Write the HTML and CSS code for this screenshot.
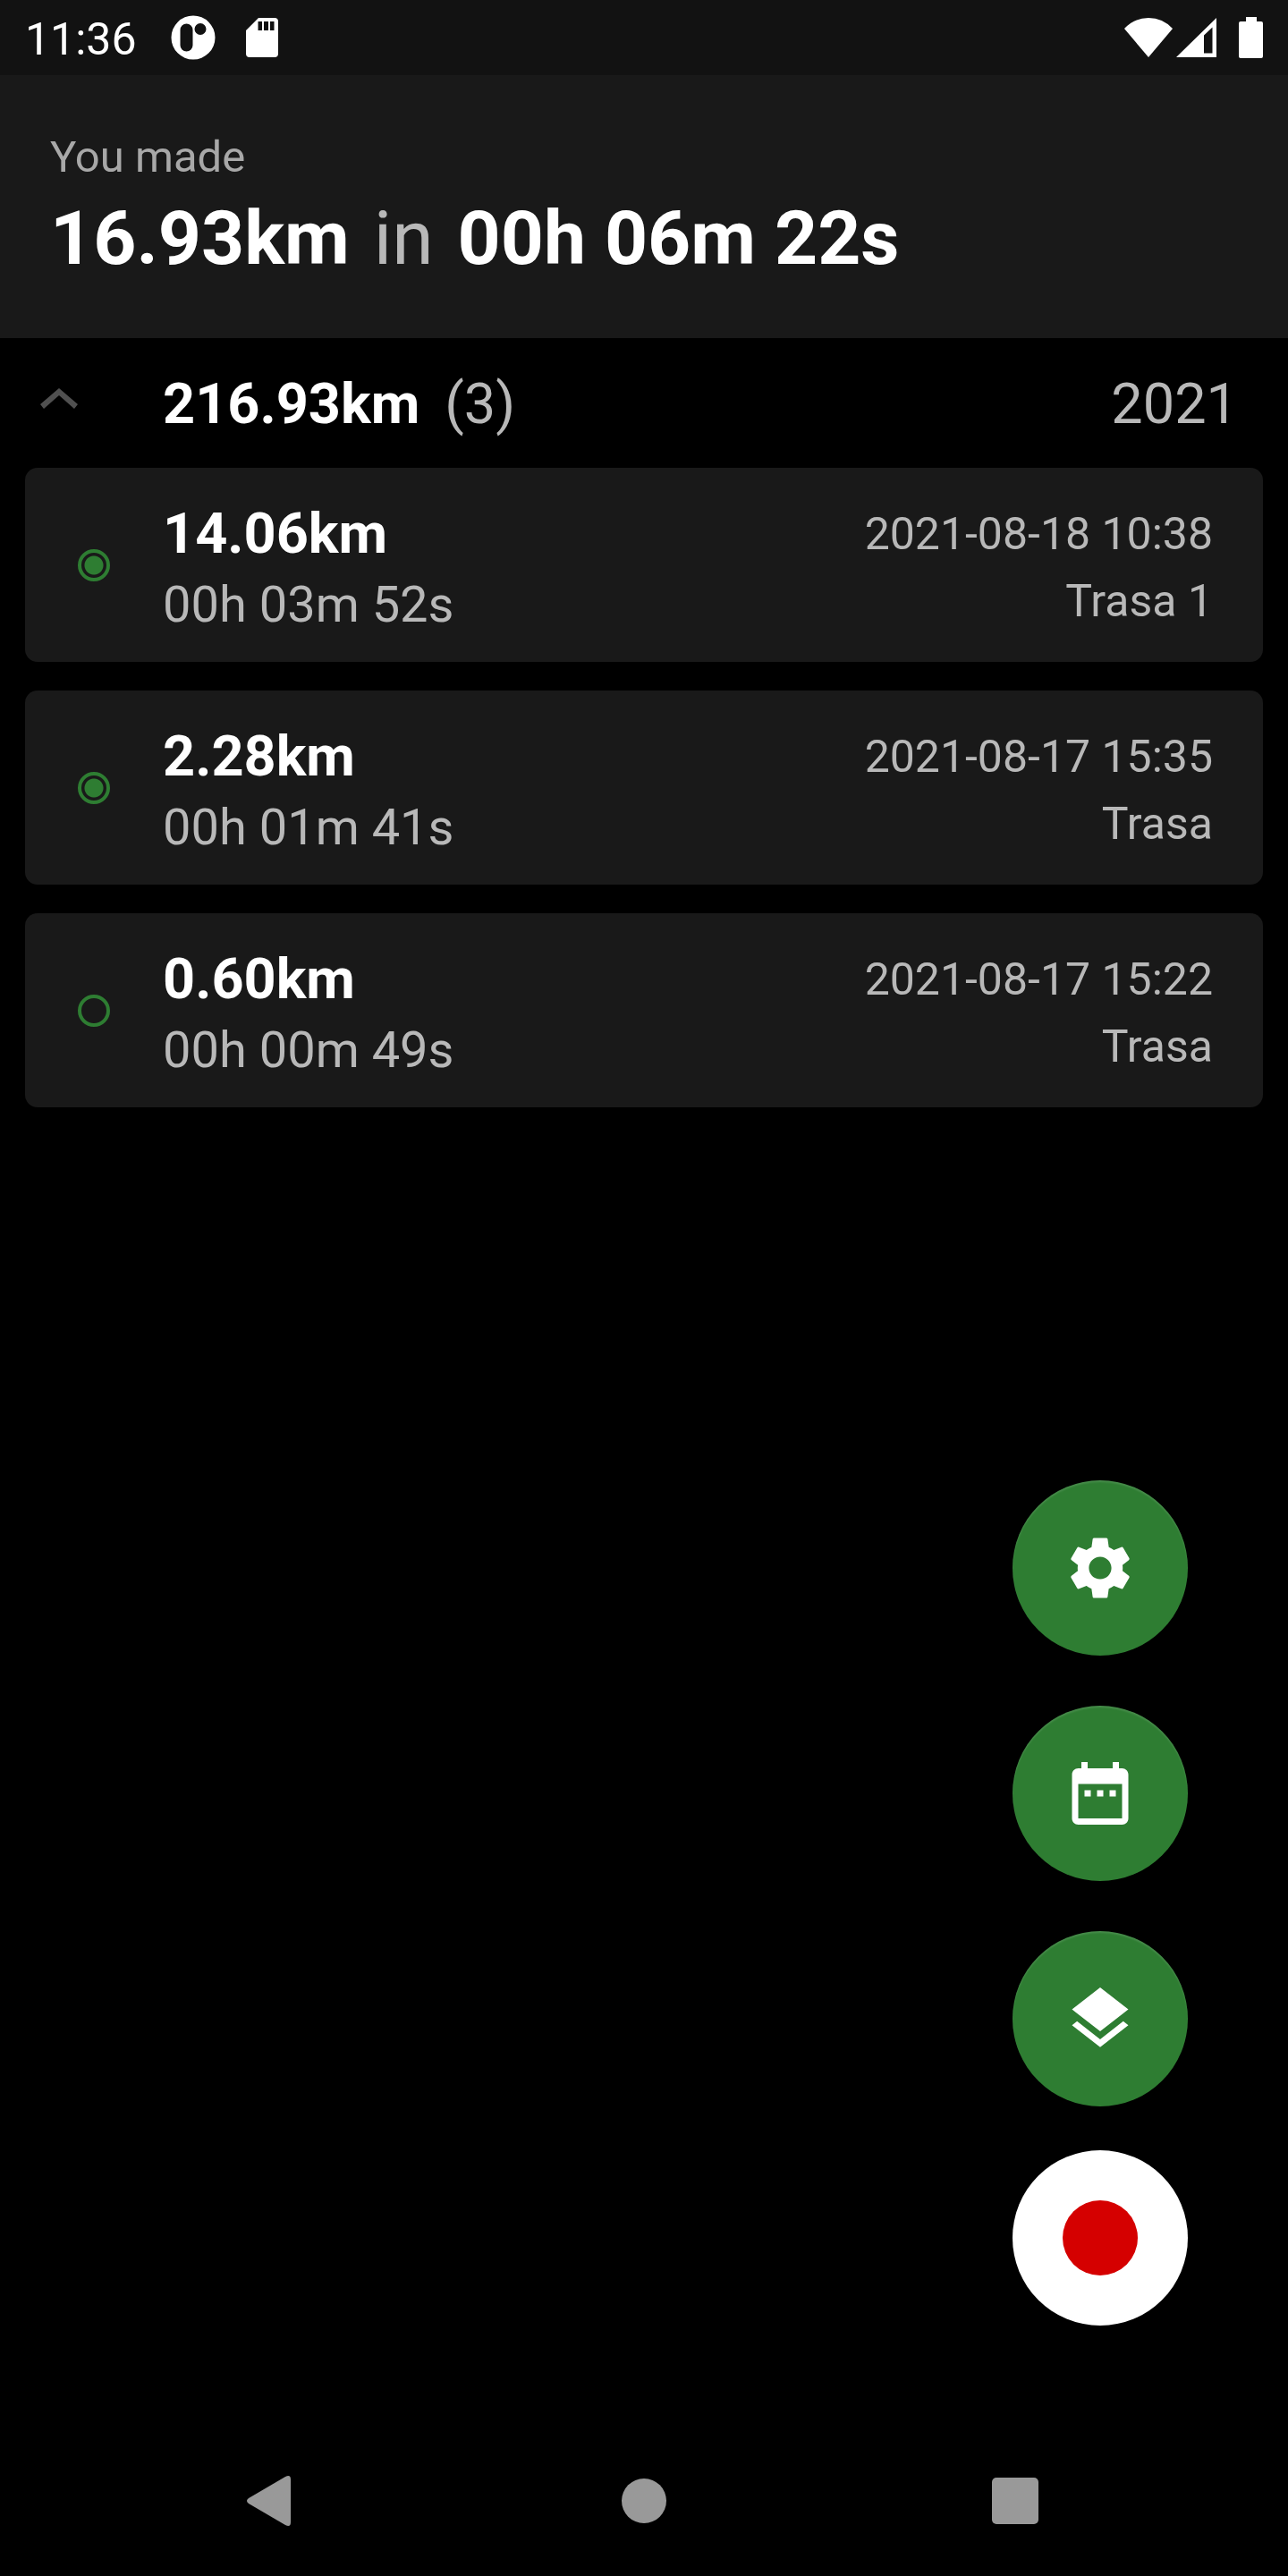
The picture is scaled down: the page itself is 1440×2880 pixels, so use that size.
FILE: index.html
```html
<!DOCTYPE html>
<html lang="en">
<head>
<meta charset="utf-8">
<meta name="viewport" content="width=device-width, initial-scale=1">
<title>Tracks</title>
<link rel="stylesheet" href="styles.css">
</head>
<body>
<div class="status-bar">
  <time class="clock">11:36</time>
  <div class="notifications">
    <svg width="50" height="50" viewBox="0 0 50 50"><path fill-rule="evenodd" d="M25 0.500a24.500 24.500 0 1 0 0 49a24.500 24.500 0 1 0 0-49zM17.500 9.500a7 7 0 0 0-7 7v17a7 7 0 0 0 14 0v-17a7 7 0 0 0-7-7zM33 9a6.500 6.500 0 1 0 0 13a6.500 6.500 0 1 0 0-13z"/></svg>
    <svg width="36" height="50" viewBox="0 0 36 50"><path fill-rule="evenodd" d="M14 3h18q4 0 4 4v36q0 4-4 4H4q-4 0-4-4V17zM13.500 7v10h4.500V7zM20 7v10h5V7zM27 7v10h4.500V7z"/></svg>
  </div>
  <div class="system-icons">
    <svg width="54" height="46" viewBox="0 0 54 46"><path d="M27 45L0 13Q11 1 27 1T54 13z"/></svg>
    <svg width="46" height="46" viewBox="0 0 46 46"><path fill-rule="evenodd" d="M0 45L45 1v44zM31 20.500v20h9.500V11.500z"/></svg>
    <svg width="27" height="46" viewBox="0 0 27 46"><path d="M8 0h12v5h5q2 0 2 2v37q0 2-2 2H2q-2 0-2-2V7q0-2 2-2h6z"/></svg>
  </div>
</div>
<header class="summary">
  <p class="summary-label">You made</p>
  <h1 class="summary-total"><span>16.93km</span><span class="joiner">in</span><span>00h 06m 22s</span></h1>
</header>
<main class="tracks">
  <div class="group">
    <button class="toggle" type="button" aria-label="Collapse 2021" aria-expanded="true">
      <svg width="42" height="24" viewBox="0 0 42 24"><path d="M21 0L0 18l4 5L21 8l17 15 4-5z"/></svg>
    </button>
    <h2 class="group-total"><span class="distance">216.93km</span><span>(3)</span></h2>
    <span class="group-year">2021</span>
  </div>
  <ul class="track-list">
    <li class="track">
      <input class="mark" type="checkbox" aria-label="Show track Trasa 1" checked>
      <div class="figures"><span class="distance">14.06km</span><span class="duration">00h 03m 52s</span></div>
      <div class="details"><time>2021-08-18 10:38</time><span>Trasa 1</span></div>
    </li>
    <li class="track">
      <input class="mark" type="checkbox" aria-label="Show track Trasa, 15:35" checked>
      <div class="figures"><span class="distance">2.28km</span><span class="duration">00h 01m 41s</span></div>
      <div class="details"><time>2021-08-17 15:35</time><span>Trasa</span></div>
    </li>
    <li class="track">
      <input class="mark" type="checkbox" aria-label="Show track Trasa, 15:22">
      <div class="figures"><span class="distance">0.60km</span><span class="duration">00h 00m 49s</span></div>
      <div class="details"><time>2021-08-17 15:22</time><span>Trasa</span></div>
    </li>
  </ul>
</main>
<div class="actions">
  <button class="fab" type="button" aria-label="Settings">
    <svg width="84" height="84" viewBox="0 0 24 24"><path d="M19.140 12.940c.04-.3.06-.61.06-.94 0-.32-.02-.64-.07-.94l2.030-1.580c.18-.14.23-.41.12-.61l-1.920-3.320c-.12-.22-.37-.29-.59-.22l-2.390.96c-.5-.38-1.030-.7-1.620-.94l-.36-2.540c-.04-.24-.24-.41-.48-.41h-3.840c-.24 0-.43.17-.47.41l-.36 2.540c-.59.24-1.130.57-1.620.94l-2.390-.96c-.22-.08-.47 0-.59.22L2.740 8.870c-.12.21-.08.47.12.61l2.030 1.580c-.05.3-.09.63-.09.94s.02.64.07.94l-2.030 1.580c-.18.14-.23.41-.12.61l1.920 3.320c.12.22.37.29.59.22l2.390-.96c.5.38 1.030.7 1.620.94l.36 2.540c.05.24.24.41.48.41h3.840c.24 0 .44-.17.47-.41l.36-2.540c.59-.24 1.130-.56 1.620-.94l2.390.96c.22.08.47 0 .59-.22l1.920-3.320c.12-.22.07-.47-.12-.61l-2.010-1.580zM12 15.600c-1.980 0-3.600-1.620-3.600-3.600s1.620-3.600 3.600-3.600 3.600 1.620 3.600 3.600-1.620 3.600-3.600 3.600z"/></svg>
  </button>
  <button class="fab" type="button" aria-label="Calendar">
    <svg width="84" height="84" viewBox="0 0 24 24"><path d="M9 11H7v2h2v-2zm4 0h-2v2h2v-2zm4 0h-2v2h2v-2zm2-7h-1V2h-2v2H8V2H6v2H5c-1.110 0-1.990.9-1.990 2L3 20c0 1.100.89 2 2 2h14c1.100 0 2-.9 2-2V6c0-1.100-.9-2-2-2zm0 16H5V9h14v11z"/></svg>
  </button>
  <button class="fab" type="button" aria-label="Layers">
    <svg width="84" height="84" viewBox="0 0 24 24"><path d="M11.990 18.540l-7.370-5.730L3 14.070l9 7 9-7-1.630-1.270-7.380 5.740zM12 16l7.360-5.730L21 9l-9-7-9 7 1.630 1.270L12 16z"/></svg>
  </button>
  <button class="fab fab-record" type="button" aria-label="Record"><span class="record-dot"></span></button>
</div>
<nav class="nav-bar" aria-label="System">
  <button class="nav-button" type="button" aria-label="Back">
    <svg width="66" height="56" viewBox="0 0 66 56"><path d="M47 1q6-3 6 3v48q0 6-6 3L6 31q-4-3 0-6z"/></svg>
  </button>
  <button class="nav-button" type="button" aria-label="Home">
    <svg width="56" height="56" viewBox="0 0 56 56"><circle cx="28" cy="28" r="25"/></svg>
  </button>
  <button class="nav-button" type="button" aria-label="Overview">
    <svg width="56" height="56" viewBox="0 0 56 56"><rect x="2" y="2" width="52" height="52" rx="5"/></svg>
  </button>
</nav>
</body>
</html>
```
FILE: styles.css
```css
* {
  box-sizing: border-box;
}

body {
  display: flex;
  flex-direction: column;
  min-height: 100vh;
  margin: 0;
  background: #000;
  color: #b8b8b8;
  font-family: Roboto, "Liberation Sans", sans-serif;
  font-size: 50px;
  line-height: 58px;
}

button {
  display: flex;
  align-items: center;
  justify-content: center;
  padding: 0;
  border: 0;
  background: none;
  color: inherit;
  font: inherit;
  cursor: pointer;
}

svg {
  display: block;
  fill: currentColor;
}

h1,
h2,
p,
ul {
  margin: 0;
  padding: 0;
}

/* Status bar */

.status-bar {
  display: flex;
  align-items: center;
  height: 84px;
  padding: 0 28px;
  background: #121212;
  color: #fff;
}

.clock {
  margin-right: 38px;
  padding-top: 4px;
}

.notifications {
  display: flex;
  align-items: center;
  gap: 34px;
}

.system-icons {
  display: flex;
  align-items: center;
  gap: 4px;
  margin-left: auto;
}

.system-icons svg:last-child {
  margin-left: 20px;
}

/* Totals */

.summary {
  padding: 63px 56px 62px;
  background: #191919;
}

.summary-label {
  color: #a8a8a8;
  font-size: 49px;
}

.summary-total {
  display: flex;
  gap: 27px;
  margin-top: 12px;
  color: #fff;
  font-size: 84px;
  font-weight: 700;
  line-height: 99px;
}

.joiner {
  color: #b8b8b8;
  font-weight: 400;
}

/* Track list */

.group {
  display: flex;
  align-items: center;
  height: 145px;
  padding: 2px 56px 0 0;
  font-size: 63px;
  line-height: 74px;
}

.toggle {
  width: 132px;
  height: 84px;
  margin-right: 50px;
  padding-bottom: 12px;
  color: #505050;
}

.group-total {
  display: flex;
  flex: 1;
  gap: 28px;
  font-size: 63px;
  font-weight: 400;
}

.distance {
  color: #fff;
  font-size: 63px;
  font-weight: 700;
  line-height: 74px;
}

.track-list {
  display: flex;
  flex-direction: column;
  gap: 32px;
  padding: 0 28px;
  list-style: none;
}

.track {
  display: flex;
  align-items: center;
  min-height: 217px;
  padding: 0 56px 0 59px;
  border-radius: 14px;
  background: #191919;
}

.mark {
  flex: none;
  width: 36px;
  height: 36px;
  margin: 0 59px 0 0;
  border: 4px solid #2e7d32;
  border-radius: 50%;
  appearance: none;
}

.mark:checked {
  background: radial-gradient(circle, #2e7d32 10px, transparent 11px);
}

.figures,
.details {
  display: flex;
  flex-direction: column;
  padding-top: 5px;
}

.figures {
  flex: 1;
  gap: 9px;
}

.duration {
  font-size: 56px;
  line-height: 66px;
}

.details {
  gap: 17px;
  text-align: right;
}

/* Floating actions */

.actions {
  display: flex;
  flex-direction: column;
  align-items: flex-end;
  gap: 56px;
  margin-top: auto;
  padding: 56px 112px 112px;
}

.fab {
  width: 196px;
  height: 196px;
  border-radius: 50%;
  background: #2e7d32;
  box-shadow: inset 0 2px 2px rgba(255, 255, 255, 0.12);
  color: #fff;
}

.fab-record {
  margin-top: -7px;
  background: #fff;
}

.record-dot {
  width: 84px;
  height: 84px;
  border-radius: 50%;
  background: #d50000;
}

/* System navigation */

.nav-bar {
  display: flex;
  justify-content: center;
  gap: 247px;
  color: #999;
}

.nav-button {
  width: 168px;
  height: 168px;
}
```
